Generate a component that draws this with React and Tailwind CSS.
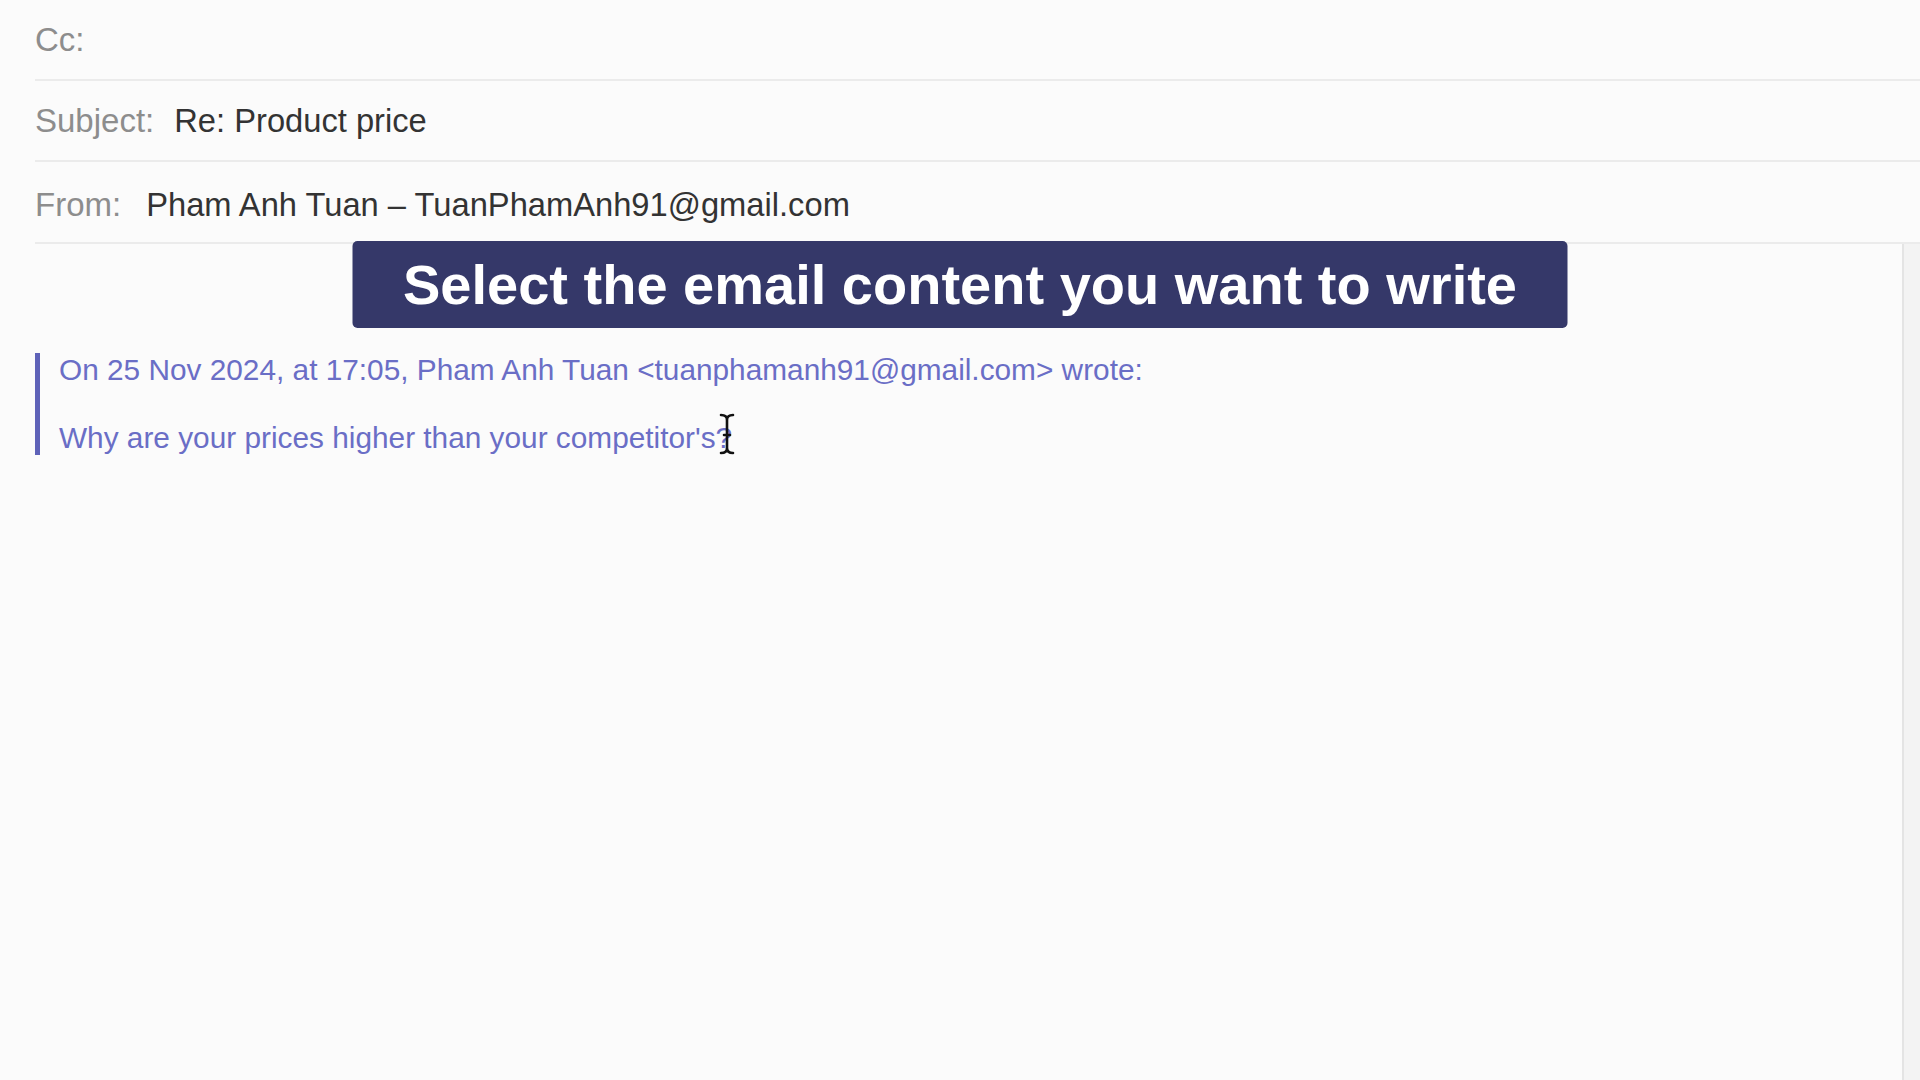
export default function App() {
  const font = { fontFamily: '"Liberation Sans", Arial, Helvetica, sans-serif' };

  return (
    <div className="relative w-full h-screen overflow-hidden bg-[#fbfbfb] flex flex-col" style={font}>
      {/* header fields */}
      <div className="pl-[35px]">
        <div className="h-[81px] flex items-center border-b-2 border-[#ebebeb]">
          <span className="text-[33px] text-[#8d8d8d]">Cc:</span>
        </div>
        <div className="h-[81px] flex items-center border-b-2 border-[#ebebeb]">
          <span className="text-[33px] text-[#8d8d8d]">Subject:</span>
          <span className="text-[32.7px] text-[#333333] ml-[20px]">Re: Product price</span>
        </div>
        <div className="h-[82px] flex items-center pt-[5px] border-b-2 border-[#ebebeb]">
          <span className="text-[33px] text-[#8d8d8d]">From:</span>
          <span className="text-[32.7px] text-[#333333] ml-[25px]">Pham Anh Tuan – TuanPhamAnh91@gmail.com</span>
        </div>
      </div>

      {/* body */}
      <div className="flex-1 flex">
        <div className="flex-1 pl-[35px] pt-[109px]">
          <div className="border-l-[5px] border-[#5e62b8] pl-[19px] text-[29.8px] leading-[34px] text-[#6a6ec6]">
            <p>On 25 Nov 2024, at 17:05, Pham Anh Tuan &lt;tuanphamanh91@gmail.com&gt; wrote:</p>
            <p>&nbsp;</p>
            <p>
              <span className="relative">
                Why are your prices higher than your competitor's?
                <svg
                  className="absolute -right-[3px] -top-[8px]"
                  width="16"
                  height="42"
                  viewBox="0 0 16 42"
                >
                  <path
                    d="M2 2 Q8 2 8 7 Q8 2 14 2 M8 7 L8 35 M2 40 Q8 40 8 35 Q8 40 14 40 M5 22 L11 22"
                    fill="none"
                    stroke="#111"
                    strokeWidth="2.6"
                    strokeLinecap="round"
                  />
                </svg>
              </span>
            </p>
          </div>
        </div>
        {/* scrollbar track */}
        <div className="w-[18px] bg-[#f3f3f3] border-l-2 border-[#e4e4e4]" />
      </div>

      {/* tutorial caption overlay */}
      <div className="absolute top-[241px] left-1/2 -translate-x-1/2 w-[1215px] h-[87px] rounded-[5px] bg-[#353869] flex items-center justify-center">
        <span className="text-white font-bold text-[56px] leading-none">
          Select the email content you want to write
        </span>
      </div>
    </div>
  );
}
